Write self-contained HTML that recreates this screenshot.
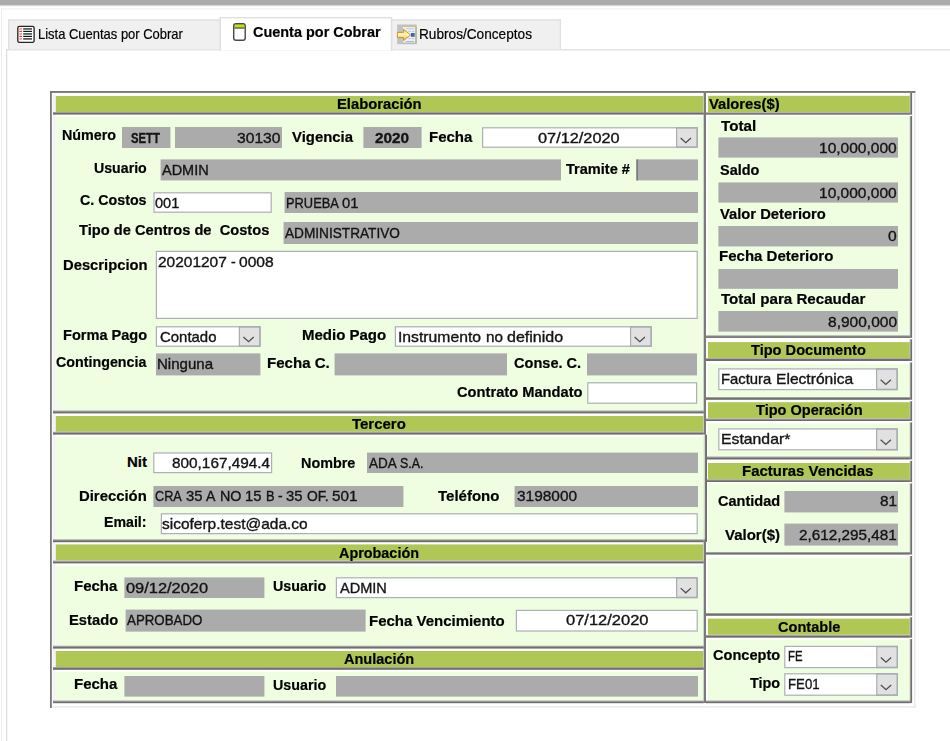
<!DOCTYPE html>
<html lang="es"><head><meta charset="utf-8"><title>Cuenta por Cobrar</title>
<style>
html,body{margin:0;padding:0;background:#fff;}
body{width:950px;height:741px;overflow:hidden;position:relative;font-family:"Liberation Sans",sans-serif;}
#bg{position:absolute;left:0;top:0;}
#t span{position:absolute;white-space:pre;line-height:20px;transform-origin:0 0;display:block;}
#t .l{font-size:15px;font-weight:700;color:#000;-webkit-text-stroke:0.2px #000;}
#t .v{font-size:14.5px;font-weight:400;color:#141414;-webkit-text-stroke:0.35px #141414;}
#t .m span{position:static;display:inline-block;}
</style></head><body>
<svg id="bg" width="950" height="741" viewBox="0 0 950 741">
<rect x="0.00" y="0.00" width="950.00" height="5.20" fill="#ababab" />
<rect x="0.00" y="5.20" width="950.00" height="1.00" fill="#cfcfcf" />
<rect x="2.00" y="8.20" width="948.00" height="1.40" fill="#f3f3f3" />
<rect x="1.00" y="8.00" width="1.00" height="733.00" fill="#ececec" />
<rect x="6.00" y="49.20" width="944.00" height="1.20" fill="#dcdcdc" />
<rect x="6.00" y="49.20" width="1.20" height="691.80" fill="#dcdcdc" />
<rect x="8.00" y="19.20" width="213.00" height="30.10" fill="#e0e0e0" />
<rect x="9.30" y="20.60" width="211.70" height="28.70" fill="#f0f0f0" />
<rect x="391.00" y="19.20" width="170.00" height="30.10" fill="#e0e0e0" />
<rect x="392.30" y="20.60" width="168.70" height="28.70" fill="#f0f0f0" />
<rect x="559.70" y="19.20" width="1.30" height="30.10" fill="#e0e0e0" />
<rect x="219.50" y="17.00" width="172.70" height="33.60" fill="#e0e0e0" />
<rect x="221.00" y="18.40" width="169.80" height="32.20" fill="#ffffff" />
<rect x="50.00" y="91.00" width="865.40" height="1.90" fill="#787878" />
<rect x="50.00" y="91.00" width="1.80" height="617.00" fill="#787878" />
<rect x="52.00" y="706.40" width="863.60" height="1.20" fill="#e4e4e4" />
<rect x="914.20" y="93.20" width="1.20" height="614.40" fill="#e4e4e4" />
<rect x="52.60" y="94.00" width="3.00" height="609.00" fill="#f3f3f6" />
<rect x="55.80" y="96.00" width="647.50" height="16.20" fill="#b0c756" />
<rect x="53.00" y="112.00" width="651.00" height="1.00" fill="#a6a6a6" />
<rect x="53.00" y="112.90" width="651.00" height="1.70" fill="#6e6e6e" />
<rect x="55.80" y="116.80" width="647.50" height="293.60" fill="#effde0" />
<rect x="53.00" y="410.50" width="651.00" height="1.00" fill="#a6a6a6" />
<rect x="53.00" y="411.40" width="651.00" height="2.00" fill="#6e6e6e" />
<rect x="55.80" y="416.00" width="647.50" height="15.80" fill="#b0c756" />
<rect x="53.00" y="431.80" width="651.00" height="1.00" fill="#a6a6a6" />
<rect x="53.00" y="432.70" width="651.00" height="1.90" fill="#6e6e6e" />
<rect x="55.80" y="437.00" width="647.50" height="102.20" fill="#effde0" />
<rect x="53.00" y="539.30" width="651.00" height="1.00" fill="#a6a6a6" />
<rect x="53.00" y="540.20" width="651.00" height="2.00" fill="#6e6e6e" />
<rect x="55.80" y="544.40" width="647.50" height="16.10" fill="#b0c756" />
<rect x="53.00" y="560.60" width="651.00" height="1.00" fill="#a6a6a6" />
<rect x="53.00" y="561.50" width="651.00" height="1.90" fill="#6e6e6e" />
<rect x="55.80" y="565.80" width="647.50" height="79.80" fill="#effde0" />
<rect x="53.00" y="645.70" width="651.00" height="1.00" fill="#a6a6a6" />
<rect x="53.00" y="646.60" width="651.00" height="2.00" fill="#6e6e6e" />
<rect x="55.80" y="651.00" width="647.50" height="16.00" fill="#b0c756" />
<rect x="53.00" y="667.00" width="651.00" height="1.00" fill="#a6a6a6" />
<rect x="53.00" y="667.90" width="651.00" height="1.90" fill="#6e6e6e" />
<rect x="55.80" y="672.00" width="647.50" height="28.40" fill="#effde0" />
<rect x="53.00" y="700.50" width="651.00" height="1.00" fill="#a6a6a6" />
<rect x="53.00" y="701.40" width="651.00" height="1.80" fill="#6e6e6e" />
<rect x="708.00" y="95.80" width="201.80" height="16.40" fill="#b0c756" />
<rect x="706.00" y="112.20" width="205.00" height="1.00" fill="#a6a6a6" />
<rect x="706.00" y="113.10" width="205.00" height="1.60" fill="#6e6e6e" />
<rect x="708.00" y="116.20" width="201.80" height="219.20" fill="#effde0" />
<rect x="706.00" y="335.30" width="205.00" height="1.00" fill="#a6a6a6" />
<rect x="706.00" y="336.20" width="205.00" height="1.70" fill="#6e6e6e" />
<rect x="708.00" y="342.10" width="201.80" height="16.00" fill="#b0c756" />
<rect x="706.00" y="358.10" width="205.00" height="1.00" fill="#a6a6a6" />
<rect x="706.00" y="359.00" width="205.00" height="2.00" fill="#6e6e6e" />
<rect x="708.00" y="364.00" width="201.80" height="33.00" fill="#effde0" />
<rect x="706.00" y="397.00" width="205.00" height="1.00" fill="#a6a6a6" />
<rect x="706.00" y="397.90" width="205.00" height="1.90" fill="#6e6e6e" />
<rect x="708.00" y="402.20" width="201.80" height="16.20" fill="#b0c756" />
<rect x="706.00" y="418.40" width="205.00" height="1.00" fill="#a6a6a6" />
<rect x="706.00" y="419.30" width="205.00" height="1.70" fill="#6e6e6e" />
<rect x="708.00" y="423.50" width="201.80" height="33.00" fill="#effde0" />
<rect x="706.00" y="456.50" width="205.00" height="1.00" fill="#a6a6a6" />
<rect x="706.00" y="457.40" width="205.00" height="2.10" fill="#6e6e6e" />
<rect x="708.00" y="463.00" width="201.80" height="16.50" fill="#b0c756" />
<rect x="706.00" y="479.30" width="205.00" height="1.00" fill="#a6a6a6" />
<rect x="706.00" y="480.20" width="205.00" height="1.80" fill="#6e6e6e" />
<rect x="708.00" y="483.50" width="201.80" height="68.50" fill="#effde0" />
<rect x="706.00" y="552.00" width="205.00" height="1.00" fill="#a6a6a6" />
<rect x="706.00" y="552.90" width="205.00" height="1.70" fill="#6e6e6e" />
<rect x="708.00" y="557.70" width="201.80" height="55.30" fill="#effde0" />
<rect x="706.00" y="613.00" width="205.00" height="1.00" fill="#a6a6a6" />
<rect x="706.00" y="613.90" width="205.00" height="1.90" fill="#6e6e6e" />
<rect x="708.00" y="618.60" width="201.80" height="16.20" fill="#b0c756" />
<rect x="706.00" y="634.90" width="205.00" height="1.00" fill="#a6a6a6" />
<rect x="706.00" y="635.80" width="205.00" height="1.90" fill="#6e6e6e" />
<rect x="708.00" y="640.00" width="201.80" height="60.40" fill="#effde0" />
<rect x="706.00" y="700.50" width="205.00" height="1.00" fill="#a6a6a6" />
<rect x="706.00" y="701.40" width="205.00" height="1.80" fill="#6e6e6e" />
<rect x="703.50" y="92.90" width="0.80" height="610.10" fill="#a6a6a6" />
<rect x="704.10" y="92.90" width="1.80" height="610.10" fill="#6e6e6e" />
<rect x="703.30" y="436.90" width="1.90" height="102.40" fill="#effde0" />
<rect x="703.30" y="434.70" width="1.90" height="2.20" fill="#ffffff" />
<rect x="704.60" y="434.70" width="0.80" height="107.20" fill="#a6a6a6" />
<rect x="705.20" y="434.70" width="1.80" height="107.20" fill="#6e6e6e" />
<rect x="909.80" y="92.90" width="0.90" height="610.10" fill="#a6a6a6" />
<rect x="910.50" y="92.90" width="1.60" height="610.10" fill="#6e6e6e" />
<rect x="909.60" y="114.70" width="2.70" height="1.40" fill="#ffffff" />
<rect x="909.60" y="337.90" width="2.70" height="1.40" fill="#ffffff" />
<rect x="909.60" y="361.00" width="2.70" height="1.40" fill="#ffffff" />
<rect x="909.60" y="399.80" width="2.70" height="1.40" fill="#ffffff" />
<rect x="909.60" y="421.00" width="2.70" height="1.40" fill="#ffffff" />
<rect x="909.60" y="459.50" width="2.70" height="1.40" fill="#ffffff" />
<rect x="909.60" y="482.00" width="2.70" height="1.40" fill="#ffffff" />
<rect x="909.60" y="554.60" width="2.70" height="1.40" fill="#ffffff" />
<rect x="909.60" y="615.80" width="2.70" height="1.40" fill="#ffffff" />
<rect x="909.60" y="637.70" width="2.70" height="1.40" fill="#ffffff" />
<rect x="122.00" y="127.00" width="48.40" height="21.00" fill="#ababab" />
<rect x="175.00" y="127.00" width="107.00" height="21.00" fill="#ababab" />
<rect x="363.40" y="127.00" width="58.20" height="21.00" fill="#ababab" />
<rect x="482.00" y="127.20" width="215.80" height="20.60" fill="#adafb6" />
<rect x="483.20" y="128.40" width="213.40" height="18.20" fill="#ffffff" />
<rect x="676.00" y="127.20" width="21.80" height="20.60" fill="#a9abb3" />
<rect x="677.20" y="128.70" width="19.10" height="17.60" fill="#e1e1e1" />
<path d="M680.65 137.95 L685.80 142.60 L690.95 137.95" fill="none" stroke="#4c4c4c" stroke-width="1.25"/>
<rect x="160.60" y="159.40" width="400.40" height="21.00" fill="#ababab" />
<rect x="636.40" y="159.40" width="61.60" height="21.00" fill="#ababab" />
<rect x="636.40" y="159.40" width="1.60" height="21.00" fill="#7a7a7a" />
<rect x="153.40" y="192.20" width="118.40" height="20.60" fill="#adafb6" />
<rect x="154.60" y="193.40" width="116.00" height="18.20" fill="#ffffff" />
<rect x="284.60" y="192.00" width="413.40" height="21.00" fill="#ababab" />
<rect x="283.60" y="222.00" width="414.40" height="22.00" fill="#ababab" />
<rect x="155.80" y="250.80" width="542.00" height="68.20" fill="#adafb6" />
<rect x="157.00" y="252.00" width="539.60" height="65.80" fill="#ffffff" />
<rect x="155.80" y="326.20" width="104.80" height="20.60" fill="#adafb6" />
<rect x="157.00" y="327.40" width="102.40" height="18.20" fill="#ffffff" />
<rect x="238.80" y="326.20" width="21.80" height="20.60" fill="#a9abb3" />
<rect x="240.00" y="327.70" width="19.10" height="17.60" fill="#e1e1e1" />
<path d="M243.45 336.95 L248.60 341.60 L253.75 336.95" fill="none" stroke="#4c4c4c" stroke-width="1.25"/>
<rect x="394.80" y="326.20" width="257.00" height="20.60" fill="#adafb6" />
<rect x="396.00" y="327.40" width="254.60" height="18.20" fill="#ffffff" />
<rect x="630.00" y="326.20" width="21.80" height="20.60" fill="#a9abb3" />
<rect x="631.20" y="327.70" width="19.10" height="17.60" fill="#e1e1e1" />
<path d="M634.65 336.95 L639.80 341.60 L644.95 336.95" fill="none" stroke="#4c4c4c" stroke-width="1.25"/>
<rect x="156.00" y="353.40" width="104.40" height="22.00" fill="#ababab" />
<rect x="334.60" y="353.40" width="172.40" height="22.00" fill="#ababab" />
<rect x="587.00" y="353.40" width="110.00" height="22.00" fill="#ababab" />
<rect x="587.20" y="382.20" width="110.00" height="21.60" fill="#adafb6" />
<rect x="588.40" y="383.40" width="107.60" height="19.20" fill="#ffffff" />
<rect x="153.20" y="452.40" width="119.00" height="20.80" fill="#adafb6" />
<rect x="154.40" y="453.60" width="116.60" height="18.40" fill="#ffffff" />
<rect x="367.00" y="452.60" width="331.00" height="20.40" fill="#ababab" />
<rect x="153.40" y="486.00" width="250.00" height="21.00" fill="#ababab" />
<rect x="514.60" y="486.00" width="183.40" height="21.00" fill="#ababab" />
<rect x="160.80" y="513.20" width="537.00" height="21.00" fill="#adafb6" />
<rect x="162.00" y="514.40" width="534.60" height="18.60" fill="#ffffff" />
<rect x="124.40" y="577.40" width="140.00" height="20.60" fill="#ababab" />
<rect x="335.80" y="577.20" width="362.00" height="21.00" fill="#adafb6" />
<rect x="337.00" y="578.40" width="359.60" height="18.60" fill="#ffffff" />
<rect x="676.00" y="577.20" width="21.80" height="21.00" fill="#a9abb3" />
<rect x="677.20" y="578.70" width="19.10" height="18.00" fill="#e1e1e1" />
<path d="M680.65 588.15 L685.80 592.80 L690.95 588.15" fill="none" stroke="#4c4c4c" stroke-width="1.25"/>
<rect x="125.60" y="609.60" width="240.00" height="22.00" fill="#ababab" />
<rect x="515.80" y="609.80" width="182.00" height="21.80" fill="#adafb6" />
<rect x="517.00" y="611.00" width="179.60" height="19.40" fill="#ffffff" />
<rect x="124.40" y="676.00" width="140.00" height="20.60" fill="#ababab" />
<rect x="336.00" y="676.00" width="362.00" height="20.60" fill="#ababab" />
<rect x="718.40" y="137.40" width="179.60" height="20.20" fill="#ababab" />
<rect x="718.40" y="182.40" width="179.60" height="20.20" fill="#ababab" />
<rect x="718.40" y="226.00" width="179.60" height="20.40" fill="#ababab" />
<rect x="718.40" y="269.00" width="179.60" height="19.80" fill="#ababab" />
<rect x="718.40" y="311.00" width="179.60" height="20.60" fill="#ababab" />
<rect x="718.20" y="368.30" width="179.60" height="21.90" fill="#adafb6" />
<rect x="719.40" y="369.50" width="177.20" height="19.50" fill="#ffffff" />
<rect x="876.00" y="368.30" width="21.80" height="21.90" fill="#a9abb3" />
<rect x="877.20" y="369.80" width="19.10" height="18.90" fill="#e1e1e1" />
<path d="M880.65 379.70 L885.80 384.35 L890.95 379.70" fill="none" stroke="#4c4c4c" stroke-width="1.25"/>
<rect x="718.20" y="428.30" width="179.60" height="22.10" fill="#adafb6" />
<rect x="719.40" y="429.50" width="177.20" height="19.70" fill="#ffffff" />
<rect x="876.00" y="428.30" width="21.80" height="22.10" fill="#a9abb3" />
<rect x="877.20" y="429.80" width="19.10" height="19.10" fill="#e1e1e1" />
<path d="M880.65 439.80 L885.80 444.45 L890.95 439.80" fill="none" stroke="#4c4c4c" stroke-width="1.25"/>
<rect x="784.40" y="491.00" width="113.60" height="21.40" fill="#ababab" />
<rect x="784.40" y="523.60" width="113.60" height="22.00" fill="#ababab" />
<rect x="784.20" y="645.80" width="113.80" height="22.40" fill="#adafb6" />
<rect x="785.40" y="647.00" width="111.40" height="20.00" fill="#ffffff" />
<rect x="876.20" y="645.80" width="21.80" height="22.40" fill="#a9abb3" />
<rect x="877.40" y="647.30" width="19.10" height="19.40" fill="#e1e1e1" />
<path d="M880.85 657.45 L886.00 662.10 L891.15 657.45" fill="none" stroke="#4c4c4c" stroke-width="1.25"/>
<rect x="784.20" y="673.20" width="113.80" height="22.60" fill="#adafb6" />
<rect x="785.40" y="674.40" width="111.40" height="20.20" fill="#ffffff" />
<rect x="876.20" y="673.20" width="21.80" height="22.60" fill="#a9abb3" />
<rect x="877.40" y="674.70" width="19.10" height="19.60" fill="#e1e1e1" />
<path d="M880.85 684.95 L886.00 689.60 L891.15 684.95" fill="none" stroke="#4c4c4c" stroke-width="1.25"/>
<defs>
<linearGradient id="ag" x1="0" y1="0" x2="0" y2="1"><stop offset="0" stop-color="#f3c95a"/><stop offset="0.45" stop-color="#fff6c4"/><stop offset="1" stop-color="#e9b33a"/></linearGradient>
<filter id="bl" x="-20%" y="-20%" width="140%" height="140%"><feGaussianBlur stdDeviation="0.35"/></filter>
</defs>
<g id="ico1" filter="url(#bl)">
<rect x="17.8" y="26.4" width="16.3" height="16" rx="1.6" fill="#ffffff" stroke="#262626" stroke-width="1.35"/>
<rect x="19.3" y="28.0" width="2.7" height="1.8" fill="#f59a9a"/><rect x="23.2" y="28.0" width="8.8" height="1.8" fill="#5e5e5e"/>
<rect x="19.3" y="30.8" width="2.7" height="1.2" fill="#ee3a3a"/><rect x="23.2" y="30.8" width="8.8" height="1.2" fill="#161616"/>
<rect x="19.3" y="33.0" width="2.7" height="1.8" fill="#f59a9a"/><rect x="23.2" y="33.0" width="8.8" height="1.8" fill="#5e5e5e"/>
<rect x="19.3" y="35.8" width="2.7" height="1.2" fill="#ee3a3a"/><rect x="23.2" y="35.8" width="8.8" height="1.2" fill="#161616"/>
<rect x="19.3" y="38.0" width="2.7" height="1.8" fill="#f59a9a"/><rect x="23.2" y="38.0" width="8.8" height="1.8" fill="#5e5e5e"/>
</g>
<g id="ico2" filter="url(#bl)">
<rect x="233.7" y="23.6" width="11.5" height="16.7" rx="2.3" fill="#ffffff" stroke="#484848" stroke-width="1.4"/>
<rect x="234.4" y="24.5" width="10.1" height="2.9" rx="1.1" fill="#c8e400" stroke="#6c7c1c" stroke-width="0.6"/>
<rect x="234.2" y="27.6" width="10.5" height="1.1" fill="#505050"/>
</g>
<g id="ico3" filter="url(#bl)">
<rect x="397.1" y="24.5" width="19.6" height="19.7" fill="#c2c2c2"/>
<rect x="403" y="25.9" width="13.5" height="17.4" fill="#cdbf7c"/>
<rect x="403" y="27.0" width="12.4" height="16.0" fill="#eaf0fb"/>
<rect x="415.4" y="27" width="1.1" height="16.3" fill="#b9b08a"/>
<rect x="403" y="42.6" width="13.5" height="0.9" fill="#b4b4b0"/>
<rect x="406" y="28.3" width="8" height="0.9" fill="#b9c4e2"/>
<rect x="408.3" y="30.9" width="2.4" height="0.9" fill="#b3bddc"/><rect x="411.8" y="30.9" width="2.4" height="0.9" fill="#b3bddc"/>
<rect x="410.9" y="33.0" width="3.8" height="3.8" fill="#2f6ea9"/>
<rect x="408.3" y="38.2" width="2.4" height="0.9" fill="#b3bddc"/><rect x="411.8" y="38.2" width="2.4" height="0.9" fill="#b3bddc"/>
<rect x="406" y="41.0" width="8" height="0.9" fill="#9fb4dc"/>
<path d="M397.4 32.4 L403.6 32.4 L403.6 29.3 L410.6 34.95 L403.6 40.6 L403.6 37.6 L397.4 37.6 Z" fill="url(#ag)" stroke="#cf961f" stroke-width="1" stroke-linejoin="round"/>
</g>

</svg>
<div id="t">
<span class="l" style="left:38.14px;top:24.20px;font-weight:400;transform:scaleX(0.8644)">Lista Cuentas por Cobrar</span>
<span class="l" style="left:253.00px;top:21.63px;font-size:15.5px;transform:scaleX(0.9321)">Cuenta por Cobrar</span>
<span class="l" style="left:419.49px;top:24.20px;font-weight:400;transform:scaleX(0.9093)">Rubros/Conceptos</span>
<span class="l" style="left:336.62px;top:93.80px;transform:scaleX(0.9847)">Elaboración</span>
<span class="l" style="left:709.00px;top:93.80px;transform:scaleX(0.9845)">Valores($)</span>
<span class="l" style="left:62.05px;top:125.20px;transform:scaleX(0.9547)">Número</span>
<span class="l" style="left:292.00px;top:127.20px;transform:scaleX(0.9923)">Vigencia</span>
<span class="l" style="left:429.40px;top:127.20px;transform:scaleX(0.9998)">Fecha</span>
<span class="l" style="left:94.40px;top:157.80px;transform:scaleX(0.9446)">Usuario</span>
<span class="l" style="left:566.00px;top:158.80px;transform:scaleX(0.9711)">Tramite #</span>
<span class="l" style="left:80.40px;top:190.20px;transform:scaleX(0.9503)">C. Costos</span>
<span class="l" style="left:79.00px;top:219.80px;transform:scaleX(0.9774)">Tipo de Centros de  Costos</span>
<span class="l" style="left:63.02px;top:255.20px;transform:scaleX(0.9847)">Descripcion</span>
<span class="l" style="left:63.03px;top:324.80px;transform:scaleX(0.9705)">Forma Pago</span>
<span class="l" style="left:302.00px;top:325.20px;transform:scaleX(0.9999)">Medio Pago</span>
<span class="l" style="left:56.00px;top:352.40px;transform:scaleX(0.9513)">Contingencia</span>
<span class="l" style="left:267.00px;top:352.80px;transform:scaleX(1.0040)">Fecha C.</span>
<span class="l" style="left:514.00px;top:352.80px;transform:scaleX(0.9709)">Conse. C.</span>
<span class="l" style="left:456.60px;top:382.40px;transform:scaleX(0.9785)">Contrato Mandato</span>
<span class="l" style="left:352.40px;top:413.80px;transform:scaleX(0.9972)">Tercero</span>
<span class="l" style="left:127.00px;top:452.40px;transform:scaleX(1.0000)">Nit</span>
<span class="l" style="left:300.64px;top:452.80px;transform:scaleX(0.9578)">Nombre</span>
<span class="l" style="left:79.41px;top:486.20px;transform:scaleX(0.9912)">Dirección</span>
<span class="l" style="left:438.40px;top:486.20px;transform:scaleX(0.9996)">Teléfono</span>
<span class="l" style="left:104.46px;top:511.80px;transform:scaleX(0.9438)">Email:</span>
<span class="l" style="left:338.60px;top:542.80px;transform:scaleX(0.9595)">Aprobación</span>
<span class="l" style="left:74.40px;top:576.40px;transform:scaleX(0.9998)">Fecha</span>
<span class="l" style="left:273.00px;top:576.40px;transform:scaleX(0.9518)">Usuario</span>
<span class="l" style="left:69.42px;top:610.20px;transform:scaleX(0.9827)">Estado</span>
<span class="l" style="left:369.40px;top:610.80px;transform:scaleX(0.9991)">Fecha Vencimiento</span>
<span class="l" style="left:343.60px;top:648.80px;transform:scaleX(0.9677)">Anulación</span>
<span class="l" style="left:74.40px;top:673.80px;transform:scaleX(0.9998)">Fecha</span>
<span class="l" style="left:273.00px;top:675.40px;transform:scaleX(0.9518)">Usuario</span>
<span class="l" style="left:721.00px;top:116.20px;transform:scaleX(1.0130)">Total</span>
<span class="l" style="left:720.40px;top:160.20px;transform:scaleX(0.9637)">Saldo</span>
<span class="l" style="left:720.00px;top:204.20px;transform:scaleX(0.9835)">Valor Deterioro</span>
<span class="l" style="left:719.40px;top:246.40px;transform:scaleX(1.0014)">Fecha Deterioro</span>
<span class="l" style="left:721.00px;top:289.20px;transform:scaleX(1.0093)">Total para Recaudar</span>
<span class="l" style="left:751.30px;top:340.20px;transform:scaleX(0.9729)">Tipo Documento</span>
<span class="l" style="left:755.60px;top:400.40px;transform:scaleX(0.9710)">Tipo Operación</span>
<span class="l" style="left:742.00px;top:461.20px;transform:scaleX(0.9970)">Facturas Vencidas</span>
<span class="l" style="left:718.00px;top:491.20px;transform:scaleX(0.9687)">Cantidad</span>
<span class="l" style="left:725.00px;top:525.20px;transform:scaleX(0.9996)">Valor($)</span>
<span class="l" style="left:777.60px;top:616.80px;transform:scaleX(0.9714)">Contable</span>
<span class="l" style="left:713.00px;top:645.20px;transform:scaleX(0.9710)">Concepto</span>
<span class="l" style="left:750.00px;top:672.80px;transform:scaleX(0.9609)">Tipo</span>
<span class="v" style="left:131.00px;top:127.98px;font-weight:700;transform:scaleX(0.7796)">SETT</span>
<span class="v" style="left:237.00px;top:127.98px;transform:scaleX(1.0781)">30130</span>
<span class="v" style="left:375.00px;top:127.98px;font-weight:700;transform:scaleX(1.0561)">2020</span>
<span class="v" style="left:538.40px;top:127.98px;transform:scaleX(1.1254)">07/12/2020</span>
<span class="v" style="left:162.40px;top:160.38px;transform:scaleX(0.9989)">ADMIN</span>
<span class="v" style="left:155.40px;top:192.98px;transform:scaleX(1.0030)">001</span>
<span class="v m" style="left:285.51px;top:192.98px;"><span style="width:56.48px;transform:scaleX(0.8872)">PRUEBA </span><span style="width:16.47px;transform:scaleX(1.0214)">01</span></span>
<span class="v" style="left:285.40px;top:222.98px;transform:scaleX(0.9401)">ADMINISTRATIVO</span>
<span class="v m" style="left:157.60px;top:251.98px;"><span style="width:73.10px;transform:scaleX(1.0665)">20201207 </span><span style="width:8.67px;transform:scaleX(0.9792)">- </span><span style="width:34.69px;transform:scaleX(1.0755)">0008</span></span>
<span class="v" style="left:160.00px;top:326.58px;transform:scaleX(1.0300)">Contado</span>
<span class="v m" style="left:398.32px;top:326.58px;"><span style="width:87.37px;transform:scaleX(1.0841)">Instrumento </span><span style="width:21.22px;transform:scaleX(1.0527)">no </span><span style="width:56.17px;transform:scaleX(1.1058)">definido</span></span>
<span class="v" style="left:156.56px;top:354.38px;transform:scaleX(1.0380)">Ninguna</span>
<span class="v" style="left:172.40px;top:452.98px;transform:scaleX(1.0576)">800,167,494.4</span>
<span class="v m" style="left:368.60px;top:452.98px;"><span style="width:31.52px;transform:scaleX(0.9315)">ADA </span><span style="width:23.35px;transform:scaleX(0.8523)">S.A.</span></span>
<span class="v m" style="left:155.40px;top:486.38px;"><span style="width:30.28px;transform:scaleX(0.8741)">CRA </span><span style="width:20.59px;transform:scaleX(1.0215)">35 </span><span style="width:13.32px;transform:scaleX(0.9725)">A </span><span style="width:25.43px;transform:scaleX(0.9867)">NO </span><span style="width:20.59px;transform:scaleX(1.0215)">15 </span><span style="width:12.11px;transform:scaleX(0.8841)">B </span><span style="width:8.48px;transform:scaleX(0.9572)">- </span><span style="width:20.59px;transform:scaleX(1.0215)">35 </span><span style="width:25.43px;transform:scaleX(0.9567)">OF. </span><span style="width:25.43px;transform:scaleX(1.0513)">501</span></span>
<span class="v" style="left:516.60px;top:486.38px;transform:scaleX(1.0641)">3198000</span>
<span class="v" style="left:162.40px;top:514.38px;transform:scaleX(1.0677)">sicoferp.test@ada.co</span>
<span class="v" style="left:126.00px;top:577.98px;transform:scaleX(1.1309)">09/12/2020</span>
<span class="v" style="left:340.00px;top:577.98px;transform:scaleX(1.0032)">ADMIN</span>
<span class="v" style="left:127.40px;top:610.38px;transform:scaleX(0.9181)">APROBADO</span>
<span class="v" style="left:565.60px;top:610.38px;transform:scaleX(1.1364)">07/12/2020</span>
<span class="v" style="left:819.33px;top:137.98px;transform:scaleX(1.0712)">10,000,000</span>
<span class="v" style="left:819.33px;top:182.98px;transform:scaleX(1.0712)">10,000,000</span>
<span class="v" style="left:888.00px;top:225.98px;transform:scaleX(1.0750)">0</span>
<span class="v" style="left:828.00px;top:311.58px;transform:scaleX(1.0707)">8,900,000</span>
<span class="v m" style="left:721.38px;top:368.98px;"><span style="width:54.42px;transform:scaleX(1.0232)">Factura </span><span style="width:77.20px;transform:scaleX(1.0763)">Electrónica</span></span>
<span class="v" style="left:721.31px;top:428.58px;transform:scaleX(1.0883)">Estandar*</span>
<span class="v" style="left:879.60px;top:491.38px;transform:scaleX(1.0583)">81</span>
<span class="v" style="left:799.00px;top:524.58px;transform:scaleX(1.0533)">2,612,295,481</span>
<span class="v" style="left:788.22px;top:646.38px;transform:scaleX(0.7840)">FE</span>
<span class="v" style="left:788.09px;top:673.98px;transform:scaleX(0.9109)">FE01</span>
</div>
</body></html>
